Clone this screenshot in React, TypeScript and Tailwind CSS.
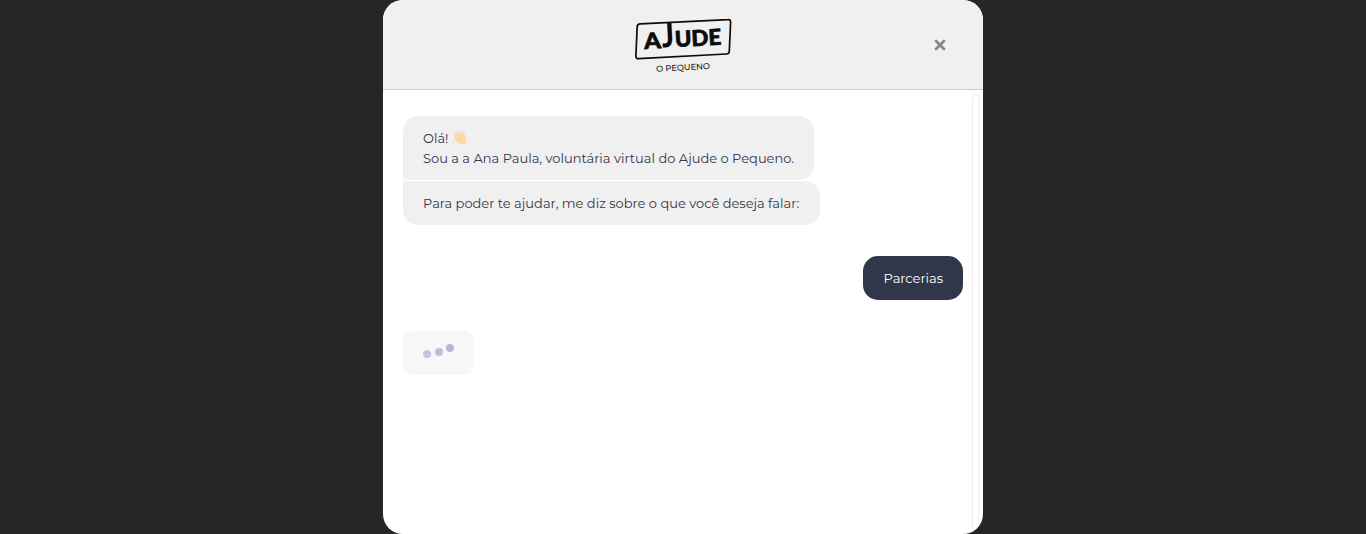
import React from "react";

function Logo() {
  return (
    <svg viewBox="0 0 120 70" className="h-[70px] w-[120px]" fontFamily="Lato, sans-serif" aria-label="Ajude o Pequeno">
      <path d="M15.2 13.8 L103 9.6 Q105.8 9.4 105.6 12.2 L104.3 41.2 Q104.2 43.8 101.5 44 L13.6 48.7 Q10.8 48.8 10.9 46 L12.2 16.6 Q12.4 14 15.2 13.8 Z" fill="none" stroke="#0c0c0e" strokeWidth="1.7" />
      <g transform="rotate(-3 58 38)" fill="#0c0c0e" fontWeight="900">
        <text x="19.5" y="37" fontSize="22" stroke="#0c0c0e" strokeWidth="0.7" textLength="16.8" lengthAdjust="spacingAndGlyphs">A</text>
        <text transform="translate(37.3 36.3) scale(1.03 1.56)" fontSize="22" textLength="12" lengthAdjust="spacingAndGlyphs">J</text>
        <text x="50.3" y="36.6" fontSize="22" stroke="#0c0c0e" strokeWidth="0.7" textLength="46.5" lengthAdjust="spacingAndGlyphs">UDE</text>
      </g>
      <text transform="rotate(-3 58 58)" x="31" y="60.4" fontSize="8.4" fontWeight="500" fontFamily="Montserrat, sans-serif" fill="#19191c" textLength="54">O PEQUENO</text>
    </svg>
  );
}

function Wave() {
  return (
    <svg viewBox="0 0 16 16" className="ml-1 inline-block size-4 align-[-3px]" aria-hidden="true">
      <path d="M2.3 5.5 Q1.5 4.2 2.7 3.8 Q2.8 2.2 4.2 2.6 Q5.5 1.2 6.7 2.7 L9.2 4.7 L9.6 2.6 Q10.4 1.2 11.5 2.5 L14 7 Q15.4 11 13 13.5 Q10.2 15.4 7 13.5 L2.8 10.4 Q1.5 9.2 2.7 8.1 Z" fill="#fbdaa7" />
      <path d="M3.8 4.4 L8 8.6 M2.8 6.5 L6.7 10.2 M5.6 3 L9.4 7" stroke="#efca95" strokeWidth=".6" fill="none" />
      <path d="M7.3 1.4 L8.5 2 M1 11.1 L2.4 12 M11.3 1.7 L12.5 2.8" stroke="#b9ccdc" strokeWidth="1" fill="none" />
    </svg>
  );
}

export default function App() {
  return (
    <div className="flex h-[534px] justify-center overflow-hidden bg-[#262626] font-['Montserrat','Inter',sans-serif] text-[13px] leading-5 text-[#373448]">
      <main className="flex w-[600px] flex-col overflow-hidden rounded-[20px] bg-white">
        <header className="grid h-[90px] shrink-0 grid-cols-[1fr_124px_1fr] items-center border-b border-[#cecdd8] bg-[#f0f0f0]">
          <span />
          <div className="pl-1"><Logo /></div>
          <button aria-label="Fechar" className="mr-[37px] justify-self-end">
            <svg viewBox="0 0 12 12" className="size-3" fill="none" stroke="#85868d" strokeWidth="2.8" strokeLinecap="round">
              <path d="M2 2 L10 10 M10 2 L2 10" />
            </svg>
          </button>
        </header>
        <div className="flex min-h-0 flex-1">
          <section className="flex w-[589px] flex-col items-start pl-5 pr-[9px] pt-[26px]">
            <div className="h-16 w-[411px] whitespace-nowrap rounded-[15px] rounded-bl-none bg-[#f0f0f0] px-5 py-3">
              <p className="h-5">Olá!<Wave /></p>
              <p>Sou a a Ana Paula, voluntária virtual do Ajude o Pequeno.</p>
            </div>
            <div className="mt-px h-11 w-[417px] whitespace-nowrap rounded-[15px] rounded-tl-none bg-[#f0f0f0] px-5 py-3">
              <p>Para poder te ajudar, me diz sobre o que você deseja falar:</p>
            </div>
            <div className="mt-[31px] h-11 w-[100px] self-end whitespace-nowrap rounded-[15px] bg-[#31374a] py-3 pl-[20.5px] text-white">
              Parcerias
            </div>
            <div className="mt-[31px] flex h-11 w-[71px] items-start gap-1 rounded-[10px] bg-[#f7f7f7] pl-5 pt-[13px]">
              <i className="mt-1.5 size-2 rounded-full bg-[#c3c5dc]" />
              <i className="mt-1 size-2 rounded-full bg-[#bbbfda]" />
              <i className="-ml-px size-2 rounded-full bg-[#b4b8d8]" />
            </div>
          </section>
          <div className="mt-1 w-[7px] rounded-t-[3px] border border-b-0 border-[#f0f0f0]" />
        </div>
      </main>
    </div>
  );
}
